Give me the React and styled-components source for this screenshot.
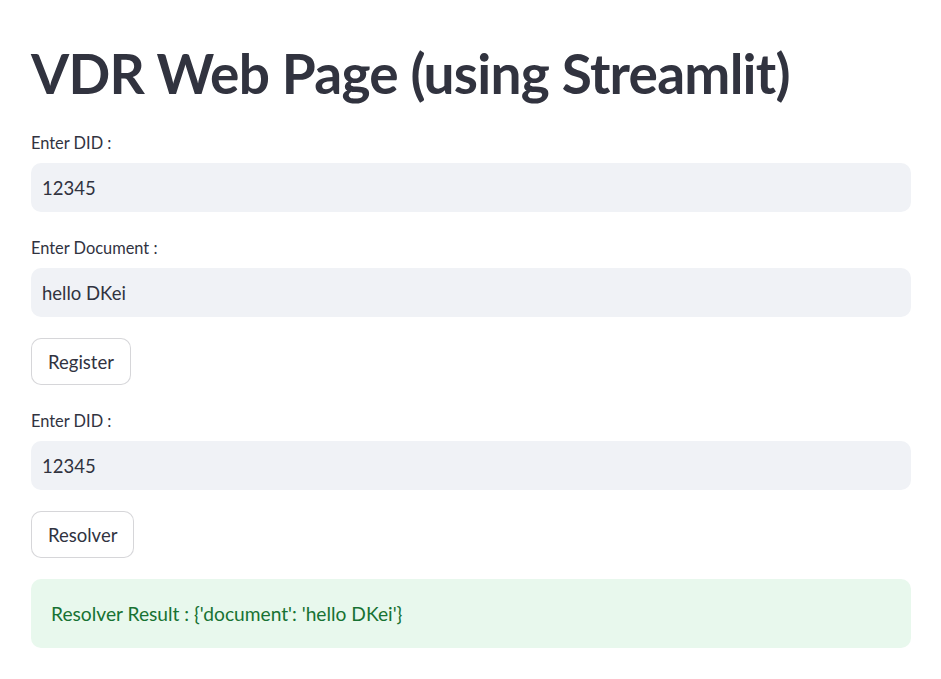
import React from "react";
import styled, { createGlobalStyle } from "styled-components";

const GlobalStyle = createGlobalStyle`
  body {
    margin: 0;
    background: #ffffff;
    font-family: Lato, "Noto Sans", sans-serif;
    color: #31333f;
  }
`;

const Page = styled.main`
  display: flex;
  flex-direction: column;
  gap: 21px;
  padding: 40px 30px 30px 31px;
`;

const Title = styled.h1`
  margin: 0;
  font-size: 55px;
  line-height: 67px;
  font-weight: 700;
  color: #31333f;
  letter-spacing: -0.75px;
`;

const Field = styled.div`
  display: flex;
  flex-direction: column;
`;

const Label = styled.label`
  padding-top: 5px;
  margin-bottom: 10px;
  font-size: 16.4px;
  line-height: 20px;
  color: #31333f;
`;

const Input = styled.div`
  display: flex;
  align-items: center;
  height: 49px;
  padding: 0 11px;
  border-radius: 10px;
  background: #f0f2f6;
  font-size: 18.5px;
  color: #31333f;
`;

const Button = styled.button`
  align-self: flex-start;
  height: 47px;
  padding: 0 16px;
  border: 1px solid rgba(49, 51, 63, 0.2);
  border-radius: 10px;
  background: #ffffff;
  font-family: inherit;
  font-size: 18.5px;
  color: #31333f;
  cursor: pointer;
`;

const Alert = styled.div`
  padding: 20px;
  border-radius: 10px;
  background: #e8f8ed;
  color: #177233;
  font-size: 19.2px;
  line-height: 29px;
`;

function TextField({ label, value }) {
  return (
    <Field>
      <Label>{label}</Label>
      <Input>{value}</Input>
    </Field>
  );
}

export default function App() {
  return (
    <>
      <GlobalStyle />
      <Page>
        <Title>VDR Web Page (using Streamlit)</Title>
        <TextField label="Enter DID :" value="12345" />
        <TextField label="Enter Document :" value="hello DKei" />
        <Button>Register</Button>
        <TextField label="Enter DID :" value="12345" />
        <Button>Resolver</Button>
        <Alert>Resolver Result : {"{'document': 'hello DKei'}"}</Alert>
      </Page>
    </>
  );
}
